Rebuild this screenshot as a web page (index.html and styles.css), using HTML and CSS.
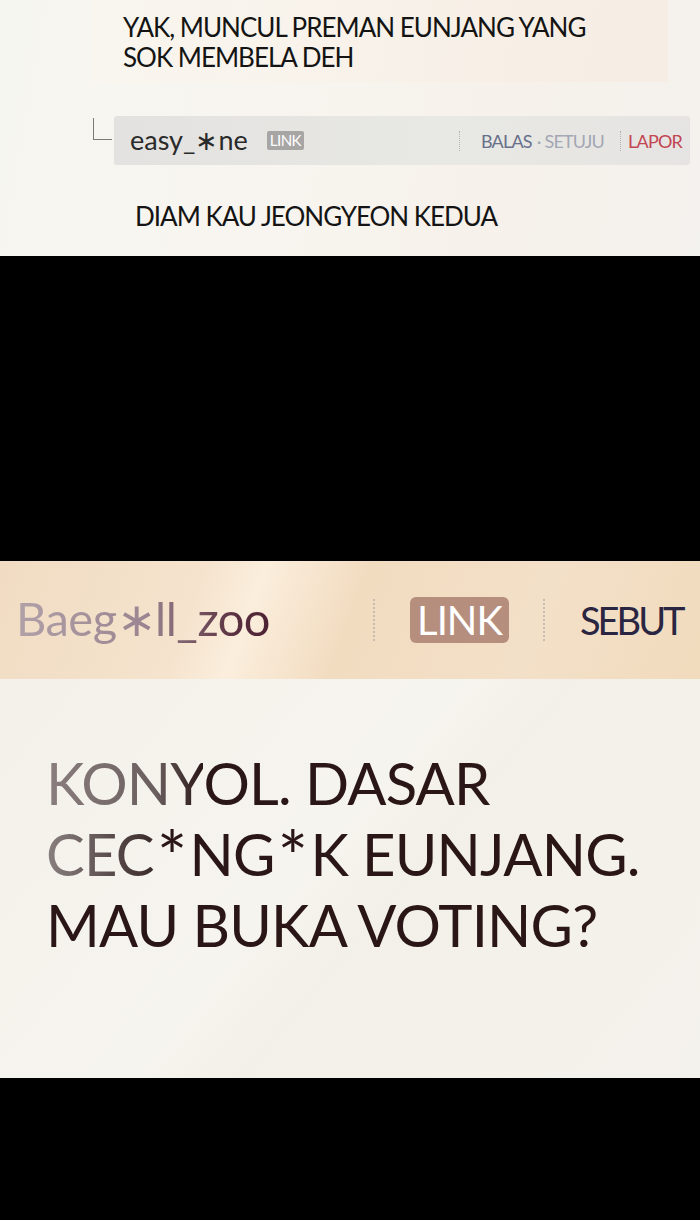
FILE: index.html
```html
<!DOCTYPE html>
<html>
<head>
<meta charset="utf-8">
<link rel="stylesheet" href="styles.css">
</head>
<body>
<div class="page">
  <section class="panel-top">
    <div class="bubble">
      <p class="comment">YAK, MUNCUL PREMAN EUNJANG YANG</p>
      <p class="comment">SOK MEMBELA DEH</p>
    </div>
    <div class="reply">
      <span class="corner"></span>
      <div class="bar">
        <span class="name">easy_∗ne</span>
        <span class="tag">LINK</span>
        <span class="spacer"></span>
        <span class="dots"></span>
        <span class="act balas">BALAS</span>
        <span class="act setuju">· SETUJU</span>
        <span class="dots"></span>
        <span class="act lapor">LAPOR</span>
      </div>
    </div>
    <p class="comment reply-text">DIAM KAU JEONGYEON KEDUA</p>
  </section>
  <div class="gap-black"></div>
  <section class="panel-big">
    <div class="big-head">
      <span class="big-name">Baeg∗ll_zoo</span>
      <span class="big-dots"></span>
      <span class="big-tag">LINK</span>
      <span class="big-dots"></span>
      <span class="big-sebut">SEBUT</span>
    </div>
    <div class="big-body">
      <p class="big-line"><span class="fade1">KONY</span>OL. DASAR</p>
      <p class="big-line"><span class="fade2">CEC</span><span class="star">*</span>NG<span class="star">*</span>K EUNJANG.</p>
      <p class="big-line">MAU BUKA VOTING?</p>
    </div>
  </section>
</div>
</body>
</html>
```
FILE: styles.css
```css
html, body {
  margin: 0;
  padding: 0;
  background: #000;
}
.page {
  width: 700px;
  font-family: Lato, "Open Sans", sans-serif;
}
.panel-top {
  height: 256px;
  background: linear-gradient(100deg, #f6f6f0 0%, #f8f5f0 40%, #f6f1ea 70%, #f4f2ee 100%);
  overflow: hidden;
}
.bubble {
  margin-left: 92px;
  width: 545px;
  height: 70px;
  padding: 12px 0 0 31px;
  background: linear-gradient(90deg, rgba(250,246,238,0.7), rgba(246,236,226,0.8));
}
.comment {
  margin: 0;
  font-size: 26px;
  line-height: 30px;
  letter-spacing: -1px;
  color: #141414;
}
.reply {
  display: flex;
  margin: 34px 0 0 93px;
}
.corner {
  width: 19px;
  height: 22px;
  margin-top: 2px;
  border-left: 1.5px solid #7a7a7a;
  border-bottom: 1.5px solid #7a7a7a;
  box-sizing: border-box;
}
.bar {
  display: flex;
  align-items: center;
  width: 576px;
  height: 49px;
  margin-left: 2px;
  padding: 0 8px 0 16px;
  box-sizing: border-box;
  border-radius: 3px;
  background: linear-gradient(90deg, #e3e2e0, #e8e8e4 60%, #e6e4e2);
}
.name {
  font-size: 27px;
  color: #2a2a2a;
  margin-top: -2px;
}
.tag {
  margin-left: 19px;
  padding: 0 3px;
  height: 19px;
  line-height: 19px;
  font-size: 15px;
  letter-spacing: -0.5px;
  color: #fff;
  background: #a8a6a5;
  border-radius: 2px;
}
.spacer { flex: 1; }
.dots {
  width: 0;
  height: 20px;
  border-left: 1px dotted #b6b4b0;
}
.act {
  font-size: 18px;
  letter-spacing: -0.8px;
}
.balas { margin-left: 21px; color: #67708a; }
.setuju { margin-left: 5px; margin-right: 16px; color: #a3a7b4; }
.lapor { margin-left: 7px; color: #c24552; }
.reply-text {
  margin: 36px 0 0 135px;
}
.gap-black {
  height: 305px;
  background: #000;
}
.panel-big {
  background: #f3f1ea;
}
.big-head {
  display: flex;
  align-items: center;
  height: 118px;
  padding-left: 16px;
  box-sizing: border-box;
  background: linear-gradient(110deg, #f1dcc3 0%, #f5e3cd 28%, #fbeedd 36%, #f2dcc0 50%, #f3e0c8 75%, #f1dbbd 100%);
}
.big-name {
  flex: 0 0 357px;
  font-size: 47px;
  letter-spacing: -0.5px;
  background: linear-gradient(90deg, #b0a0a8 0px, #9a8590 130px, #5a3040 220px, #4a2030 260px, #4a2030 357px);
  -webkit-background-clip: text;
  background-clip: text;
  color: transparent;
  margin-top: -4px;
}
.big-dots {
  width: 0;
  height: 42px;
  border-left: 2px dotted #c8bcb0;
}
.big-tag {
  margin: 0 34px 0 35px;
  width: 99px;
  height: 46px;
  line-height: 46px;
  text-align: center;
  font-size: 40px;
  letter-spacing: -1px;
  color: #fff;
  border-radius: 6px;
  background: #b68e7e;
}
.big-sebut {
  margin-left: 35px;
  font-size: 38px;
  letter-spacing: -3px;
  color: #2a2540;
}
.big-body {
  height: 399px;
  padding: 68px 0 0 46px;
  box-sizing: border-box;
  background: linear-gradient(130deg, #f3f1ea 0%, #f6f4ee 45%, #f2f0e8 55%, #f3f1ea 70%, #f4f2ec 100%);
}
.big-line {
  margin: 0;
  font-size: 58px;
  line-height: 71px;
  letter-spacing: -0.8px;
  color: #2a1616;
}
.star {
  display: inline-block;
  font-size: 72px;
  line-height: 0;
  vertical-align: -0.1em;
  margin: 0 3px;
}
.fade1 {
  background: linear-gradient(90deg, #8a7e7e, #6a5e5e 70%, #2a1616);
  -webkit-background-clip: text;
  background-clip: text;
  color: transparent;
}
.fade2 {
  background: linear-gradient(90deg, #8a8080, #3a2a2a);
  -webkit-background-clip: text;
  background-clip: text;
  color: transparent;
}
```
